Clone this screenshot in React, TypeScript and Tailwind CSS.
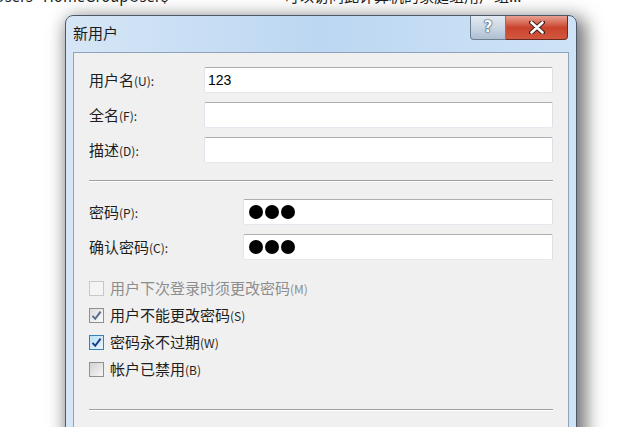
import React from "react";

const cjk = "font-['Noto_Sans_CJK_SC','Noto_Sans',sans-serif]";

function TextBox({ children, className = "" }: { children?: React.ReactNode; className?: string }) {
  return (
    <div
      className={`flex h-[26px] items-center rounded-[2px] border border-t-[#abadb3] border-r-[#dbdfe6] border-b-[#e3e9ef] border-l-[#e2e3ea] bg-white px-[3px] ${className}`}
    >
      {children}
    </div>
  );
}

function Label({ text, mn }: { text: string; mn: string }) {
  return (
    <span className={`${cjk} text-[15px] text-[#1e1e1e]`}>
      {text}
      <span className="text-[12px]">({mn}):</span>
    </span>
  );
}

function Dots() {
  return (
    <div className="ml-[2px] flex gap-[2px]">
      <span className="h-[14px] w-[14px] rounded-full bg-black" />
      <span className="h-[14px] w-[14px] rounded-full bg-black" />
      <span className="h-[14px] w-[14px] rounded-full bg-black" />
    </div>
  );
}

type BoxKind = "disabled" | "checked" | "hot" | "off";

function Check({ kind, text, mn }: { kind: BoxKind; text: string; mn: string }) {
  const box = {
    disabled: "border-[#c8c8c8] bg-[#f4f4f4]",
    checked: "border-[#8e8f8f] bg-gradient-to-br from-[#dcdcdc] to-[#fbfbfb]",
    hot: "border-[#3c7fb1] bg-gradient-to-br from-[#b9dff7] to-[#eaf6fd]",
    off: "border-[#8e8f8f] bg-gradient-to-br from-[#d2d2d2] to-[#f7f7f7]",
  }[kind];
  const tick = kind === "hot" ? "#1c3d8c" : "#5a6c8f";
  return (
    <div className="flex h-[27px] items-center">
      <span className={`flex h-[15px] w-[15px] items-center justify-center border ${box}`}>
        {(kind === "checked" || kind === "hot") && (
          <svg width="11" height="11" viewBox="0 0 11 11">
            <path d="M1.5 5.8 L4.2 8.8 L9.6 1.6" fill="none" stroke={tick} strokeWidth="2" />
          </svg>
        )}
      </span>
      <span
        className={`${cjk} ml-[6px] text-[15px] ${kind === "disabled" ? "text-[#8d8d8d]" : "text-[#1e1e1e]"}`}
      >
        {text}
        <span className="text-[12px]">({mn})</span>
      </span>
    </div>
  );
}

export default function App() {
  return (
    <div className="h-[427px] w-[622px] overflow-hidden bg-white">
      {/* list row behind the dialog, cut at the top edge */}
      <div className={`${cjk} -mt-[13px] flex h-[20px] items-end text-[15px] text-[#1e1e1e]`}>
        <span className="-ml-[6px] w-[290px]">Users&nbsp;&nbsp;&nbsp;HomeGroupUser$</span>
        <span>可以访问此计算机的家庭组用户组...</span>
      </div>

      {/* dialog */}
      <div className="ml-[65px] mt-[8px] w-[512px] rounded-t-[8px] border border-[#4a5868] bg-gradient-to-r from-[#d6e6f6] via-[#bcd7f2] to-[#cfe3f7] shadow-[5px_6px_18px_4px_rgba(0,0,0,0.55)]">
        {/* title bar */}
        <div className="flex h-[36px] items-start">
          <span className={`${cjk} ml-[7px] mt-[6px] text-[15px] text-[#1b1b1b]`}>新用户</span>
          <div className="ml-auto mr-[8px] flex">
            <div className="flex h-[24px] w-[36px] items-center justify-center rounded-bl-[4px] border border-t-0 border-[#6d7e90] bg-gradient-to-b from-[#e3ebf3] via-[#cbd7e4] to-[#aebfd2]">
              <span className="font-['DejaVu_Sans',sans-serif] text-[15px] font-bold leading-none text-white [text-shadow:0_0_1px_#3a4656,0_0_1px_#3a4656,0_0_2px_#3a4656]">
                ?
              </span>
            </div>
            <div className="flex h-[24px] w-[62px] items-center justify-center rounded-br-[4px] border border-t-0 border-l-0 border-[#6b2a22] bg-gradient-to-b from-[#e8a092] via-[#c9432d] to-[#d3573f]">
              <svg width="16" height="13" viewBox="0 0 16 13">
                <path
                  d="M2 1 L8 6.5 L14 1 M2 12 L8 6.5 L14 12"
                  fill="none"
                  stroke="#3d1d18"
                  strokeWidth="4.5"
                  strokeLinecap="round"
                />
                <path
                  d="M2.5 1.5 L8 6.5 L13.5 1.5 M2.5 11.5 L8 6.5 L13.5 11.5"
                  fill="none"
                  stroke="#ffffff"
                  strokeWidth="2.6"
                  strokeLinecap="round"
                />
              </svg>
            </div>
          </div>
        </div>

        {/* client area */}
        <div className="mx-[7px] h-[420px] border border-[#8fa3b8] bg-[#f0f0f0] px-[15px] pt-[14px]">
          <div className="flex flex-col gap-[9px]">
            <div className="flex items-center">
              <div className="w-[115px]">
                <Label text="用户名" mn="U" />
              </div>
              <TextBox className="flex-1">
                <span className="font-['Liberation_Sans',sans-serif] text-[14px] text-black">123</span>
              </TextBox>
            </div>
            <div className="flex items-center">
              <div className="w-[115px]">
                <Label text="全名" mn="F" />
              </div>
              <TextBox className="flex-1" />
            </div>
            <div className="flex items-center">
              <div className="w-[115px]">
                <Label text="描述" mn="D" />
              </div>
              <TextBox className="flex-1" />
            </div>
          </div>

          <div className="mt-[17px] border-t border-b border-t-[#a0a0a0] border-b-white" />

          <div className="mt-[17px] flex flex-col gap-[9px]">
            <div className="flex items-center">
              <div className="w-[154px]">
                <Label text="密码" mn="P" />
              </div>
              <TextBox className="flex-1">
                <Dots />
              </TextBox>
            </div>
            <div className="flex items-center">
              <div className="w-[154px]">
                <Label text="确认密码" mn="C" />
              </div>
              <TextBox className="flex-1">
                <Dots />
              </TextBox>
            </div>
          </div>

          <div className="mt-[15px] flex flex-col">
            <Check kind="disabled" text="用户下次登录时须更改密码" mn="M" />
            <Check kind="checked" text="用户不能更改密码" mn="S" />
            <Check kind="hot" text="密码永不过期" mn="W" />
            <Check kind="off" text="帐户已禁用" mn="B" />
          </div>

          <div className="mt-[26px] border-t border-b border-t-[#a0a0a0] border-b-white" />
        </div>
      </div>
    </div>
  );
}
